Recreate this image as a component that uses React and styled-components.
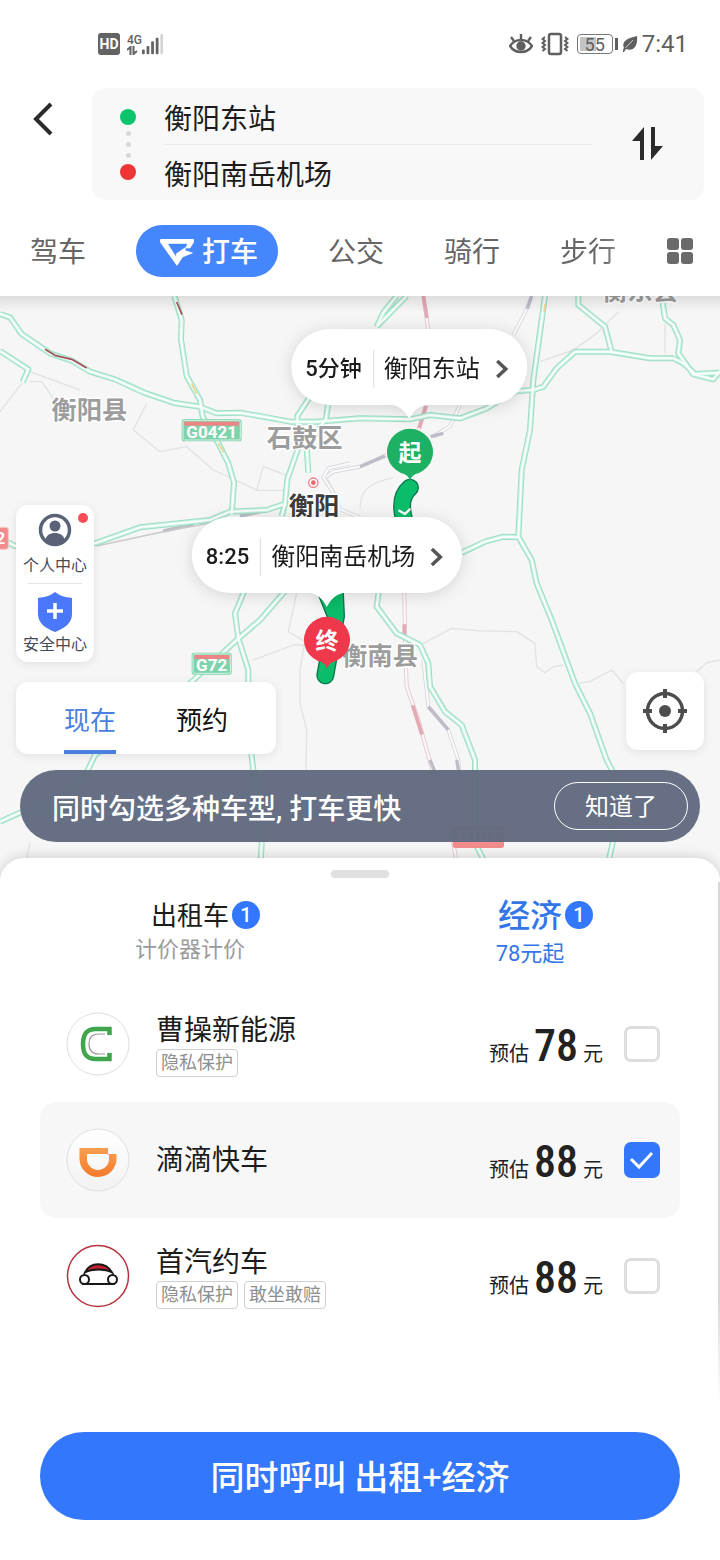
import React, { useState } from 'react';
import styled, { createGlobalStyle, css } from 'styled-components';

const GlobalStyle = createGlobalStyle`
  *, *::before, *::after { box-sizing: border-box; }
  body {
    margin: 0;
    background: #fff;
    color: #1c1c1c;
    font-family: Roboto, "Noto Sans CJK SC", sans-serif;
    font-size: 24px;
  }
  button, input { font-family: inherit; color: inherit; }
  button { border: 0; padding: 0; background: none; cursor: pointer; }
  svg { display: block; }
`;

const Page = styled.div`
  min-height: 100vh;
  display: flex;
  flex-direction: column;
`;

/* ---------- status bar ---------- */

const StatusBar = styled.div`
  height: 88px;
  padding: 0 32px 0 98px;
  display: flex;
  align-items: center;
  justify-content: space-between;
  color: #5f5f5f;
`;

const StatusGroup = styled.div`
  display: flex;
  align-items: center;
  gap: ${(p) => p.$gap}px;
`;

const HdBadge = styled.span`
  width: 22px;
  height: 22px;
  border-radius: 3px;
  background: #636363;
  color: #fff;
  font-size: 14px;
  font-weight: 700;
  line-height: 22px;
  text-align: center;
`;

const Network = styled.span`
  display: flex;
  flex-direction: column;
  align-items: flex-start;
  font-size: 12px;
  line-height: 12px;
  font-weight: 500;
`;

const Battery = styled.span`
  width: 36px;
  height: 20px;
  border: 1px solid #777;
  border-radius: 4px;
  background: linear-gradient(90deg, #c4c4c4 0 52%, #fff 52%) content-box;
  padding: 2px;
  font-size: 18px;
  line-height: 15px;
  text-align: center;
`;

const BatteryBox = styled.span`
  display: flex;
  align-items: center;
  gap: 2px;
  &::after {
    content: '';
    width: 3px;
    height: 12px;
    background: #5f5f5f;
  }
`;

const Clock = styled.span`
  font-size: 24px;
  line-height: 28px;
`;

/* ---------- header ---------- */

const Header = styled.header`
  display: flex;
  align-items: flex-start;
  padding-right: 16px;
`;

const BackButton = styled.button`
  width: 92px;
  height: 62px;
  display: grid;
  place-items: center;
  padding-right: 6px;
`;

const RouteCard = styled.div`
  flex: 1;
  min-width: 0;
  height: 112px;
  display: flex;
  align-items: center;
  padding: 0 40px 0 28px;
  border-radius: 14px;
  background: #f8f8f8;
`;

const RouteDots = styled.div`
  display: flex;
  flex-direction: column;
  align-items: center;
  gap: 6px;
`;

const Dot = styled.span`
  width: ${(p) => p.$size}px;
  height: ${(p) => p.$size}px;
  border-radius: 50%;
  background: ${(p) => p.$color};
`;

const RouteFields = styled.div`
  flex: 1;
  min-width: 0;
  margin: 0 40px 0 28px;
`;

const RouteField = styled.input`
  display: block;
  width: 100%;
  height: 56px;
  border: 0;
  padding: 2px 0 0;
  outline: 0;
  background: none;
  font-size: 28px;
  line-height: 40px;
  & + & {
    padding: 0;
    border-top: 1px solid #ebebeb;
  }
`;

const ModeNav = styled.nav`
  height: 96px;
  padding: 6px 27px 0 0;
  display: flex;
  align-items: center;
`;

const ModeButton = styled.button`
  display: flex;
  align-items: center;
  gap: 8px;
  height: 52px;
  padding: 4px 30px 0;
  font-size: 28px;
  line-height: 40px;
  white-space: nowrap;
  color: #666;
  ${(p) =>
    p.$active &&
    css`
      margin: 0 20px;
      padding: 4px 20px 0 24px;
      border-radius: 26px;
      background: #4586fd;
      color: #fff;
      font-weight: 500;
    `}
  ${(p) =>
    p.$faded &&
    css`
      background: linear-gradient(90deg, #666 60%, #c4c4c4 100%);
      background-clip: text;
      color: transparent;
      margin-right: auto;
    `}
`;

/* ---------- map ---------- */

const MapSection = styled.section`
  position: relative;
  height: 582px;
  overflow: hidden;
  background: #f6f6f6;
  &::before {
    content: '';
    position: absolute;
    z-index: 1;
    inset: 0 0 auto;
    height: 16px;
    background: linear-gradient(rgba(0, 0, 0, 0.1), rgba(0, 0, 0, 0));
  }
`;

const MapDrawing = styled.svg`
  position: absolute;
  inset: 0;
  width: 100%;
  height: 100%;
  font-family: Roboto, "Noto Sans CJK SC", sans-serif;
`;

const Callout = styled.button`
  position: absolute;
  left: calc(50% + ${(p) => p.$x}px);
  top: ${(p) => p.$y}px;
  transform: translateX(-50%);
  height: 76px;
  padding: 4px 18px 0 14px;
  display: flex;
  align-items: center;
  border-radius: 38px;
  background: #fff;
  filter: drop-shadow(0 2px 8px rgba(0, 0, 0, 0.14));
  font-size: 24px;
  line-height: 38px;
  white-space: nowrap;
`;

const CalloutTail = styled.svg`
  position: absolute;
  top: 75px;
  left: 50%;
  margin-left: -20px;
`;

const CalloutTime = styled.strong`
  font-size: 22px;
  font-weight: 500;
  padding-right: 11px;
  border-right: 1px solid #ddd;
  margin-right: 10px;
`;

const CalloutPlace = styled.span`
  margin-right: 15px;
`;

const Pin = styled.svg`
  position: absolute;
  left: calc(50% + ${(p) => p.$x}px);
  top: ${(p) => p.$y}px;
  font-family: "Noto Sans CJK SC", sans-serif;
`;

const MapControls = styled.div`
  position: relative;
  height: 100%;
  display: flex;
  flex-direction: column;
  justify-content: flex-end;
  gap: 16px;
  padding: 0 16px 36px;
  pointer-events: none;
  & button { pointer-events: auto; }
`;

const ControlRow = styled.div`
  display: flex;
  align-items: flex-end;
  justify-content: space-between;
`;

const ControlStack = styled.div`
  display: flex;
  flex-direction: column;
  align-items: flex-start;
  gap: 20px;
`;

const floating = css`
  background: #fff;
  border-radius: 12px;
  box-shadow: 0 2px 10px rgba(0, 0, 0, 0.09);
`;

const SideCard = styled.div`
  ${floating}
  width: 78px;
`;

const SideButton = styled.button`
  position: relative;
  width: 100%;
  height: 78px;
  padding: 8px 0 5px;
  display: flex;
  flex-direction: column;
  align-items: center;
  justify-content: space-between;
  color: #444b5c;
  font-size: 16px;
  line-height: 24px;
  white-space: nowrap;
`;

const SideDivider = styled.hr`
  width: 54px;
  height: 1px;
  margin: 0 auto;
  border: 0;
  background: #e4e4e4;
`;

const AlertDot = styled.span`
  position: absolute;
  top: 8px;
  right: 6px;
  width: 10px;
  height: 10px;
  border-radius: 50%;
  background: #fb4e55;
`;

const TimeTabs = styled.div`
  ${floating}
  width: 260px;
  height: 72px;
  display: flex;
  justify-content: center;
  gap: 60px;
`;

const TimeTab = styled.button`
  height: 72px;
  padding-top: 10px;
  font-size: 26px;
  line-height: 36px;
  border-bottom: 4px solid ${(p) => (p.$active ? '#4a80e0' : 'transparent')};
  color: ${(p) => (p.$active ? '#4a80e0' : '#111')};
`;

const LocateButton = styled.button`
  ${floating}
  width: 78px;
  height: 78px;
  margin-bottom: 4px;
  display: grid;
  place-items: center;
`;

const Tip = styled.div`
  height: 72px;
  margin: 0 4px;
  padding: 0 12px 0 32px;
  display: flex;
  align-items: center;
  justify-content: space-between;
  border-radius: 36px;
  background: rgba(97, 106, 127, 0.97);
  color: #fff;
  font-size: 28px;
  font-weight: 500;
  white-space: nowrap;
`;

const TipText = styled.span`
  padding-top: 2px;
`;

const TipButton = styled.button`
  width: 134px;
  height: 48px;
  padding-top: 2px;
  border: 1px solid #fff;
  border-radius: 24px;
  color: #fff;
  font-size: 24px;
  line-height: 36px;
`;

/* ---------- bottom sheet ---------- */

const Sheet = styled.main`
  position: relative;
  flex: 1;
  margin-top: -20px;
  padding: 12px 40px 40px;
  display: flex;
  flex-direction: column;
  border-radius: 24px 24px 0 0;
  background: #fff;
  box-shadow: 0 -2px 12px rgba(0, 0, 0, 0.14);
  &::after {
    content: '';
    position: absolute;
    top: 24px;
    right: 0;
    width: 2px;
    height: 520px;
    background: linear-gradient(#d8d8d8 80%, #fff);
  }
`;

const Handle = styled.div`
  align-self: center;
  width: 58px;
  height: 8px;
  border-radius: 4px;
  background: #e0e0e0;
`;

const ClassTabs = styled.div`
  height: 108px;
  margin: 0 -20px;
  padding-top: 14px;
  display: grid;
  grid-template-columns: 1fr 1fr;
  align-items: start;
`;

const ClassTab = styled.button`
  display: flex;
  flex-direction: column;
  align-items: center;
  color: ${(p) => (p.$active ? '#3376e8' : '#1c1c1c')};
`;

const ClassTitle = styled.span`
  position: relative;
  font-size: ${(p) => (p.$active ? 32 : 26)}px;
  font-weight: ${(p) => (p.$active ? 500 : 400)};
  line-height: 48px;
`;

const CountBadge = styled.span`
  position: absolute;
  left: 100%;
  top: 9px;
  width: 28px;
  height: 28px;
  margin-left: 3px;
  border-radius: 50%;
  background: #3377fd;
  color: #fff;
  font-size: 20px;
  font-weight: 500;
  line-height: 28px;
`;

const ClassNote = styled.span`
  padding-top: ${(p) => (p.$active ? 4 : 0)}px;
  color: ${(p) => (p.$active ? 'inherit' : '#9b9b9b')};
  font-size: 22px;
  line-height: 20px;
`;

const RideList = styled.ul`
  margin: 0;
  padding: 0;
  list-style: none;
`;

const RideRow = styled.label`
  height: 116px;
  padding: 0 20px 0 26px;
  display: flex;
  align-items: center;
  border-radius: 16px;
  background: ${(p) => (p.$checked ? '#f7f7f7' : 'transparent')};
  cursor: pointer;
`;

const RideInfo = styled.div`
  flex: 1;
  min-width: 0;
  margin-left: 26px;
`;

const RideName = styled.div`
  padding-top: 2px;
  font-size: 28px;
  line-height: 36px;
`;

const Tags = styled.div`
  display: flex;
  gap: 6px;
`;

const Tag = styled.span`
  height: 28px;
  padding: 0 4px;
  border: 1px solid #cfcfcf;
  border-radius: 4px;
  color: #8e8e8e;
  font-size: 18px;
  line-height: 26px;
  white-space: nowrap;
`;

const Price = styled.div`
  display: flex;
  align-items: baseline;
  gap: 5px;
  padding-top: 12px;
  margin-right: 21px;
  font-size: 20px;
  line-height: 56px;
  color: #222;
`;

const Amount = styled.strong`
  font-family: "Roboto Condensed", "Liberation Sans Narrow", sans-serif;
  font-size: 44px;
  font-weight: 500;
`;

const CheckWrap = styled.span`
  position: relative;
  width: 36px;
  height: 36px;
`;

const CheckInput = styled.input`
  appearance: none;
  display: block;
  width: 36px;
  height: 36px;
  margin: 0;
  border: 3px solid #dedede;
  border-radius: 7px;
  background: #fff;
  cursor: pointer;
  &:checked {
    border-color: #3377fd;
    background: #3377fd;
  }
`;

const CheckMark = styled.svg`
  position: absolute;
  inset: 0;
  pointer-events: none;
`;

const CallButton = styled.button`
  height: 88px;
  margin-top: auto;
  border-radius: 44px;
  background: #3377fd;
  color: #fff;
  font-size: 34px;
  font-weight: 500;
  line-height: 48px;
  font-family: "Noto Sans CJK SC", sans-serif;
`;

/* ---------- icons ---------- */

const SignalIcon = () => (
  <svg width="22" height="23" viewBox="0 0 24 23" fill="#636363">
    <rect x="0" y="17" width="3" height="5" rx="1" />
    <rect x="5" y="13" width="3" height="9" rx="1" />
    <rect x="10" y="8" width="3" height="14" rx="1" />
    <rect x="15" y="4" width="3" height="18" rx="1" />
    <rect x="20" y="0" width="3" height="22" rx="1" fill="#d5d5d5" />
  </svg>
);

const DataIcon = () => (
  <svg width="11" height="9" viewBox="0 0 11 9" fill="none" stroke="#636363" strokeWidth="2">
    <path d="M0 4 3.500 1v8M6.500 0v8L10 5" />
  </svg>
);

const EyeIcon = () => (
  <svg width="24" height="22" viewBox="0 0 24 22" fill="none" stroke="#5f5f5f" strokeWidth="2.400">
    <path d="M1 13C6 5 18 5 23 13 18 21 6 21 1 13Z" />
    <path d="M12 1v5M2 4l3 4M22 4l-3 4" />
    <circle cx="12" cy="13" r="3.500" fill="#5f5f5f" />
  </svg>
);

const VibrateIcon = () => (
  <svg width="28" height="24" viewBox="0 0 28 24" fill="none" stroke="#5f5f5f" strokeWidth="2">
    <rect x="8" y="2" width="12" height="20" rx="2" strokeWidth="2.500" />
    <path d="M4 5 1.500 7 4 9 1.500 11 4 13 1.500 15 4 17 1.500 19M24 5l2.500 2-2.500 2 2.500 2-2.500 2 2.500 2-2.500 2 2.500 2" />
  </svg>
);

const LeafIcon = () => (
  <svg width="16" height="18" viewBox="0 0 16 18">
    <path d="M1 17C1 15 1 14 2 13-1 6 6 3 15 1c1 9-3 16-11 13-1 1-1 2-2 3Z" fill="#5f5f5f" />
    <path d="M3.500 13 11 5" stroke="#fff" strokeWidth=".7" />
  </svg>
);

const BackIcon = () => (
  <svg width="22" height="34" viewBox="0 0 22 34" fill="none" stroke="#2b2b2b" strokeWidth="4">
    <path d="M19 2 4 17l15 15" />
  </svg>
);

const SwapIcon = () => (
  <svg width="32" height="34" viewBox="0 0 32 34" fill="#2b2b2b">
    <path d="M12 0v33H8V14H0ZM19 0h4v19h8L19 33Z" />
  </svg>
);

const TaxiLogo = () => (
  <svg width="34" height="28" viewBox="0 0 34 28">
    <path
      d="M2 0H32C34 0 34.500 1.500 33.500 3.500L30 9H26L27.500 4.500H7.500L16 18 16.500 14.500 25.500 8.500 25 11.500 32.500 14 22.500 18 17 26.500 .5 3.500C-.5 1.500 0 0 2 0Z"
      fill="#fff"
      stroke="#fff"
      strokeWidth=".6"
    />
  </svg>
);

const GridIcon = () => (
  <svg width="26" height="26" viewBox="0 0 26 26" fill="#6a6a6a">
    <rect width="12" height="12" rx="3" />
    <rect x="14" width="12" height="12" rx="3" />
    <rect y="14" width="12" height="12" rx="3" />
    <rect x="14" y="14" width="12" height="12" rx="3" />
  </svg>
);

const ChevronIcon = () => (
  <svg width="14" height="20" viewBox="0 0 14 20" fill="none" stroke="#555" strokeWidth="3.500">
    <path d="m2 2 8.500 8L2 18" />
  </svg>
);

const UserIcon = () => (
  <svg width="34" height="34" viewBox="0 0 34 34">
    <circle cx="17" cy="17" r="14.500" fill="none" stroke="#596277" strokeWidth="3.500" />
    <circle cx="17" cy="13" r="5.500" fill="#596277" />
    <path d="M7.500 27C8 17.500 26 17.500 26.500 27 22 32 12 32 7.500 27Z" fill="#596277" />
  </svg>
);

const ShieldIcon = () => (
  <svg width="36" height="40" viewBox="0 0 36 40">
    <path d="M18 0C23 4 28 5 35 6V22C35 31 28 36 18 40 8 36 1 31 1 22V6C8 5 13 4 18 0Z" fill="#4b77fb" />
    <path d="M18 11v16M10 19h16" stroke="#fff" strokeWidth="3.500" />
  </svg>
);

const LocateIcon = () => (
  <svg width="44" height="44" viewBox="0 0 44 44" fill="none" stroke="#4d4d4d">
    <circle cx="22" cy="22" r="17.500" strokeWidth="3.500" />
    <path d="M22 0v9M22 35v9M0 22h9M35 22h9" strokeWidth="4" />
    <circle cx="22" cy="22" r="6" fill="#4d4d4d" stroke="none" />
  </svg>
);

const CaocaoLogo = () => (
  <svg width="64" height="64" viewBox="0 0 64 64" fill="none">
    <circle cx="32" cy="32" r="31" stroke="#dfdfdf" fill="#fff" />
    <path d="M43.500 23V17H30C20 17 17 23 17 32S20 47 30 47H43.500V41" stroke="#3fa64c" strokeWidth="4.500" />
    <path d="M39 22H33C25 22 23 26 23 32S25 42 33 42H39" stroke="#9a9a9a" strokeWidth="1.200" />
  </svg>
);

const DidiLogo = () => (
  <svg width="64" height="64" viewBox="0 0 64 64">
    <defs>
      <linearGradient id="didiFace" x2="0" y2="1">
        <stop stopColor="#fff" />
        <stop offset="1" stopColor="#f2f2f2" />
      </linearGradient>
      <linearGradient id="didiMark" x2="0" y2="1">
        <stop stopColor="#f9a04f" />
        <stop offset="1" stopColor="#f5792c" />
      </linearGradient>
    </defs>
    <circle cx="32" cy="32" r="31" fill="url(#didiFace)" stroke="#dfdfdf" />
    <path
      d="M13.500 20H42v6h8.500v4A18.500 18.500 0 0 1 32 49 18.500 18.500 0 0 1 13.500 31ZM21 26v4.500A11 11 0 0 0 32 42a11 11 0 0 0 11-11.500V27H42l-.5-1Z"
      fill="url(#didiMark)"
      fillRule="evenodd"
    />
  </svg>
);

const ShouqiLogo = () => (
  <svg width="64" height="64" viewBox="0 0 64 64" fill="none" stroke="#181818" strokeWidth="2">
    <circle cx="32" cy="32" r="30.500" stroke="#b5333f" strokeWidth="1.500" fill="#fff" />
    <path d="M19 28.500C24 17.500 40 17.500 46 28.500 39 24.500 26 24.500 19 28.500Z" fill="#c6202f" />
    <path d="M16 40H49" />
    <circle cx="18.500" cy="35.500" r="4.500" fill="#fff" />
    <circle cx="46.500" cy="35.500" r="4.500" fill="#fff" />
  </svg>
);

/* ---------- map drawing: three map units to a pixel ---------- */

const roads = [
  'M0 54 30 64 65 114 150 172 215 194 270 227 345 250 430 289 520 320 600 332 650 352 720 350 800 364 870 377 950 377 1080 367 1230 370 1290 357 1380 367 1460 337 1500 312 1550 285 1600 282 1630 272 1670 217 1725 167 1830 167 1950 187 2020 187 2050 202 2085 234 2160 230',
  'M523 0 545 72 543 130 560 240 600 312 608 362 655 442 685 502 702 560 695 655',
  'M0 165 85 220 68 258',
  'M930 302 892 360 895 455 862 550 855 625 845 660',
  'M985 322 978 367 920 455 925 530',
  'M0 727 45 750 285 742 420 694 630 672 690 647 800 642 850 625',
  'M1635 0 1600 252 1590 402 1565 522 1555 722 1595 792 1610 862 1655 972 1725 1162 1770 1252 1820 1392 1840 1430 1850 1500 1838 1640 1825 1700',
  'M1555 724 1510 722 1455 737 1385 770',
  'M1735 0 1735 27 1815 92 1835 167',
  'M1985 0 1995 67 2020 87 2040 132 2035 172 2080 235 2140 250 2160 225',
  'M1220 0 1130 92',
  'M1190 0 1150 50 1130 92',
  'M735 880 705 952 715 1027 745 1122 745 1160 755 1382 770 1500 785 1640 782 1700',
  'M860 880 780 972 710 1032 570 1162 285 1377 255 1440 180 1520 60 1550 0 1577',
  'M1137 880 1130 932 1190 1012 1260 1047 1285 1102 1290 1172 1335 1247 1385 1287 1425 1392 1425 1640 1455 1700',
];

const borders = [
  'M90 227 240 282M125 257 160 307M65 262 0 347M90 257H125M440 322 400 402 480 467 560 452 640 522 760 577 770 583H850M770 582 790 512 870 542',
  'M890 890 865 1007 915 1037 900 1122V1222L920 1302 918 1422M760 1092 880 1047H930',
  'M1270 1042 1355 997 1430 1004 1550 1007 1605 1042 1610 1112 1635 1130 1660 1112 1690 1107M1730 1162 1770 1157 1835 1122 1870 1162M2090 1127 2120 1100 2160 1092',
  'M1620 197 1720 162 1790 112 1855 47M1995 82V172M1080 640C1080 580 1110 560 1180 545M90 1640 80 1690',
];

const railways = [
  'M1595 0 1575 50 1540 117',
  'M1380 327 1350 390 1300 422',
  'M1160 477 1080 512 1000 527 975 545 1000 590 1020 640 1080 665',
  'M1050 502 985 517 970 545 1000 590',
  'M1270 1092 1285 1232 1345 1302 1375 1392 1380 1450',
];

const pinkRailways = ['M1270 0 1285 102', 'M1280 322 1255 402', 'M1213 890 1215 1022 1220 1172 1255 1272 1297 1422 1330 1500 1360 1640 1370 1700'];

const places = [
  { name: '衡阳县', x: 268, y: 370 },
  { name: '石鼓区', x: 914, y: 454 },
  { name: '衡南县', x: 1140, y: 1106 },
  { name: '衡东县', x: 1920, y: 12 },
];

const shields = [
  { name: 'G0421', x: 545, y: 370, w: 180 },
  { name: 'G72', x: 575, y: 1070, w: 120 },
];

function MapArt() {
  return (
    <MapDrawing viewBox="0 0 2160 1746" preserveAspectRatio="xMidYMid slice" fill="none" strokeLinejoin="round">
      <g stroke="#e2e2e2" strokeWidth="4">
        {borders.map((d) => <path key={d} d={d} />)}
      </g>
      {railways.map((d) => (
        <g key={d}>
          <path d={d} stroke="#cfced6" strokeWidth="11" />
          <path d={d} stroke="#fafafa" strokeWidth="7" />
        </g>
      ))}
      {pinkRailways.map((d) => (
        <g key={d}>
          <path d={d} stroke="#e3c6cc" strokeWidth="12" />
          <path d={d} stroke="#fcf7f8" strokeWidth="7" />
        </g>
      ))}
      <path d="M1270 0 1281 66M1213 985V1022M1238 1228 1266 1316M1278 330 1258 396" stroke="#e3aab5" strokeWidth="11" />
      <path d="M1595 0 1582 38M1285 1232 1345 1302M1370 1392 1380 1450M1290 1392 1310 1440M1330 412 1292 422M1155 480 1080 512M490 705 580 685M720 660 780 648" stroke="#bdbdc8" strokeWidth="10" />
      <path d="M290 750 500 705 640 680" stroke="#c9c9c9" strokeWidth="4" />
      <g stroke="#9fddc4" strokeWidth="18">
        {roads.map((d) => <path key={d} d={d} />)}
      </g>
      <g stroke="#c3f3df" strokeWidth="12">
        {roads.map((d) => <path key={d} d={d} />)}
      </g>
      <g stroke="#fbfefc" strokeWidth="6">
        {roads.map((d) => <path key={d} d={d} />)}
      </g>
      <path d="M135 160 165 178 215 190 260 216M530 18 546 56" stroke="#a5525a" strokeWidth="5" />
      <path d="M575 262 590 294M655 442 672 470M1636 24 1632 48" stroke="#f0d58a" strokeWidth="5" />

      <g fontSize="76" fontWeight="700" textAnchor="middle" paintOrder="stroke" stroke="#fff" strokeWidth="9">
        {places.map((p) => <text key={p.name} x={p.x} y={p.y} fill="#9d9d9d">{p.name}</text>)}
        <text x="942" y="656" fill="#3c3c3c">衡阳</text>
      </g>
      <circle cx="940" cy="560" r="14" fill="#fff" stroke="#ee7c84" strokeWidth="4" />
      <circle cx="940" cy="560" r="7" fill="#ee6670" />

      {shields.map((s) => (
        <g key={s.name}>
          <rect x={s.x} y={s.y} width={s.w} height="66" rx="8" fill="#7fd3ac" />
          <rect x={s.x + 4} y={s.y + 4} width={s.w - 8} height="58" rx="5" stroke="#d5f3e5" strokeWidth="3" />
          <rect x={s.x + 8} y={s.y + 7} width={s.w - 16} height="12" fill="#ee8585" />
          <text x={s.x + s.w / 2} y={s.y + 56} fontSize="51" fontWeight="700" textAnchor="middle" fill="#fff">{s.name}</text>
        </g>
      ))}
      <rect x="-80" y="694" width="105" height="66" rx="8" fill="#f28b8b" stroke="#f9c9c9" strokeWidth="3" />
      <text x="-72" y="744" fontSize="51" fontWeight="700" fill="#fff">322</text>
      <rect x="1358" y="1590" width="154" height="66" rx="8" fill="#f28b8b" />
      <text x="1435" y="1638" fontSize="51" fontWeight="700" textAnchor="middle" fill="#fff">G107</text>

      <g strokeLinecap="round">
        <path d="M1230 575C1195 605 1205 650 1220 700M974 876 1008 960 976 1138M1004 876 1008 960" stroke="#08784a" strokeWidth="54" />
        <path d="M1230 575C1195 605 1205 650 1220 700M974 876 1008 960 976 1138M1004 876 1008 960" stroke="#0bbd6a" strokeWidth="46" />
        <path d="m1198 644 17 10 14-14" stroke="#fff" strokeWidth="7" />
      </g>
    </MapDrawing>
  );
}

function MapPin({ x, y, color, children }) {
  return (
    <Pin $x={x} $y={y} width="48" height="54" viewBox="0 0 48 54">
      <path d="M24 53C22 47 19 46 15 45A23 23 0 1 1 33 45C29 46 26 47 24 53Z" fill={color} />
      <text x="24" y="33" fontSize="23" fontWeight="700" textAnchor="middle" fill="#fff">{children}</text>
    </Pin>
  );
}

function MapCallout({ x, y, time, place }) {
  return (
    <Callout $x={x} $y={y}>
      <CalloutTime>{time}</CalloutTime>
      <CalloutPlace>{place}</CalloutPlace>
      <ChevronIcon />
      <CalloutTail width="40" height="15" viewBox="0 0 40 15">
        <path d="M0 0C11 2 16 7 20 15 24 7 29 2 40 0Z" fill="#fff" />
      </CalloutTail>
    </Callout>
  );
}

const rides = [
  { id: 'caocao', name: '曹操新能源', price: 78, tags: ['隐私保护'], Logo: CaocaoLogo },
  { id: 'didi', name: '滴滴快车', price: 88, tags: [], Logo: DidiLogo },
  { id: 'shouqi', name: '首汽约车', price: 88, tags: ['隐私保护', '敢坐敢赔'], Logo: ShouqiLogo },
];

function Ride({ ride, checked, onToggle }) {
  const { Logo } = ride;
  return (
    <li>
      <RideRow $checked={checked}>
        <Logo />
        <RideInfo>
          <RideName>{ride.name}</RideName>
          {ride.tags.length > 0 && (
            <Tags>{ride.tags.map((t) => <Tag key={t}>{t}</Tag>)}</Tags>
          )}
        </RideInfo>
        <Price>
          预估<Amount>{ride.price}</Amount>元
        </Price>
        <CheckWrap>
          <CheckInput type="checkbox" checked={checked} onChange={onToggle} />
          {checked && (
            <CheckMark width="36" height="36" viewBox="0 0 36 36" fill="none" stroke="#fff" strokeWidth="3">
              <path d="m7 17 8 8 13-14" />
            </CheckMark>
          )}
        </CheckWrap>
      </RideRow>
    </li>
  );
}

export default function App() {
  const [picked, setPicked] = useState({ didi: true });
  const toggle = (id) => setPicked((p) => ({ ...p, [id]: !p[id] }));

  return (
    <Page>
      <GlobalStyle />
      <StatusBar>
        <StatusGroup $gap={7}>
          <HdBadge>HD</HdBadge>
          <StatusGroup $gap={0}>
            <Network>4G<DataIcon /></Network>
            <SignalIcon />
          </StatusGroup>
        </StatusGroup>
        <StatusGroup $gap={8}>
          <EyeIcon />
          <VibrateIcon />
          <StatusGroup $gap={4}>
            <BatteryBox><Battery>55</Battery></BatteryBox>
            <LeafIcon />
            <Clock>7:41</Clock>
          </StatusGroup>
        </StatusGroup>
      </StatusBar>

      <Header>
        <BackButton aria-label="返回"><BackIcon /></BackButton>
        <RouteCard>
          <RouteDots>
            <Dot $size={16} $color="#0cc46c" />
            <Dot $size={5} $color="#d8d8d8" />
            <Dot $size={5} $color="#d8d8d8" />
            <Dot $size={5} $color="#d8d8d8" />
            <Dot $size={16} $color="#ee3535" />
          </RouteDots>
          <RouteFields>
            <RouteField aria-label="起点" defaultValue="衡阳东站" />
            <RouteField aria-label="终点" defaultValue="衡阳南岳机场" />
          </RouteFields>
          <button aria-label="交换起终点"><SwapIcon /></button>
        </RouteCard>
      </Header>

      <ModeNav>
        <ModeButton>驾车</ModeButton>
        <ModeButton $active><TaxiLogo />打车</ModeButton>
        <ModeButton>公交</ModeButton>
        <ModeButton>骑行</ModeButton>
        <ModeButton $faded>步行</ModeButton>
        <button aria-label="更多"><GridIcon /></button>
      </ModeNav>

      <MapSection>
        <MapArt />
        <MapPin x={26} y={132} color="#1fb163">起</MapPin>
        <MapPin x={-57} y={320} color="#f0384c">终</MapPin>
        <MapCallout x={49} y={33} time="5分钟" place="衡阳东站" />
        <MapCallout x={-33} y={221} time="8:25" place="衡阳南岳机场" />
        <MapControls>
          <ControlRow>
            <ControlStack>
              <SideCard>
                <SideButton><UserIcon />个人中心<AlertDot /></SideButton>
                <SideDivider />
                <SideButton><ShieldIcon />安全中心</SideButton>
              </SideCard>
              <TimeTabs>
                <TimeTab $active>现在</TimeTab>
                <TimeTab>预约</TimeTab>
              </TimeTabs>
            </ControlStack>
            <LocateButton aria-label="定位"><LocateIcon /></LocateButton>
          </ControlRow>
          <Tip>
            <TipText>同时勾选多种车型, 打车更快</TipText>
            <TipButton>知道了</TipButton>
          </Tip>
        </MapControls>
      </MapSection>

      <Sheet>
        <Handle />
        <ClassTabs>
          <ClassTab>
            <ClassTitle>出租车<CountBadge>1</CountBadge></ClassTitle>
            <ClassNote>计价器计价</ClassNote>
          </ClassTab>
          <ClassTab $active>
            <ClassTitle $active>经济<CountBadge>1</CountBadge></ClassTitle>
            <ClassNote $active>78元起</ClassNote>
          </ClassTab>
        </ClassTabs>
        <RideList>
          {rides.map((r) => (
            <Ride key={r.id} ride={r} checked={!!picked[r.id]} onToggle={() => toggle(r.id)} />
          ))}
        </RideList>
        <CallButton>同时呼叫 出租+经济</CallButton>
      </Sheet>
    </Page>
  );
}
